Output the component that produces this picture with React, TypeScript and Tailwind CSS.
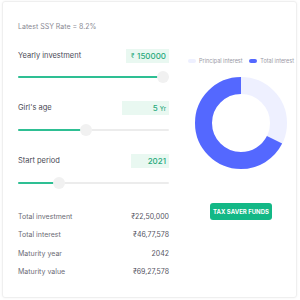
import React from 'react';

const Slider = ({ pct }: { pct: number }) => (
  <div className="relative h-[12px] flex items-center">
    <div className="w-full h-[2px] bg-[#ececec] rounded-full" />
    <div className="absolute left-0 h-[2px] bg-[#2ebf93] rounded-full" style={{ width: `${pct}%` }} />
    <div
      className="absolute w-[12px] h-[12px] rounded-full bg-[#f1f1f1] -translate-x-1/2"
      style={{ left: `${pct}%` }}
    />
  </div>
);

const Field = ({ label, children, w }: { label: string; children: React.ReactNode; w: string }) => (
  <div className="flex items-center justify-between h-[14px]">
    <span className="text-[7.5px] text-[#4a4a55]">{label}</span>
    <div className={`${w} h-[14px] bg-[#e9f8f1] flex items-center justify-end pr-[3px] text-[8px] text-[#27a97c] font-medium`}>
      {children}
    </div>
  </div>
);

const Row = ({ label, value }: { label: string; value: string }) => (
  <div className="flex justify-between items-center h-[18.5px] text-[7px] text-[#6b6b75]">
    <span>{label}</span>
    <span className="text-[#55555f]">{value}</span>
  </div>
);

const Donut = () => {
  const r = 37.5;
  const c = 2 * Math.PI * r;
  const principal = 0.325;
  return (
    <svg width="94" height="94" viewBox="0 0 94 94">
      <circle cx="47" cy="47" r={r} fill="none" stroke="#eef0ff" strokeWidth="17" />
      <circle
        cx="47"
        cy="47"
        r={r}
        fill="none"
        stroke="#5468ff"
        strokeWidth="17"
        strokeDasharray={`${c * (1 - principal)} ${c}`}
        transform="rotate(-90 47 47) scale(1 -1) translate(0 -94)"
      />
    </svg>
  );
};

export default function App() {
  return (
    <div className="w-[300px] h-[300px] bg-white p-[2px] pt-[1px]" style={{ fontFamily: 'Inter, "Noto Sans", sans-serif' }}>
      <div className="w-[295px] h-[297px] border border-[#efefef] rounded-[3px] shadow-[0_0_3px_rgba(0,0,0,0.05)] flex pl-[15px]">
        <div className="w-[151px] flex flex-col">
          <div className="mt-[20px] text-[7px] text-[#8a8a94]">Latest SSY Rate = 8.2%</div>
          <div className="mt-[16px]">
            <Field label="Yearly investment" w="w-[43px]">
              <span className="mr-auto ml-[5px] text-[6px]">₹</span>
              <span>150000</span>
            </Field>
          </div>
          <div className="mt-[8px]">
            <Slider pct={96} />
          </div>
          <div className="mt-[18px]">
            <Field label="Girl's age" w="w-[47px]">
              <span>5 <span className="text-[6px]">Yr</span></span>
            </Field>
          </div>
          <div className="mt-[9px]">
            <Slider pct={45} />
          </div>
          <div className="mt-[18px]">
            <Field label="Start period" w="w-[38px]">
              <span>2021</span>
            </Field>
          </div>
          <div className="mt-[9px]">
            <Slider pct={27} />
          </div>
          <div className="mt-[19px]">
            <Row label="Total investment" value="₹22,50,000" />
            <Row label="Total interest" value="₹46,77,578" />
            <Row label="Maturity year" value="2042" />
            <Row label="Maturity value" value="₹69,27,578" />
          </div>
        </div>
        <div className="flex-1 flex flex-col items-center pl-[19px] pr-[2px]">
          <div className="mt-[55px] w-full flex justify-between items-center text-[5.5px] text-[#9a9aa5] whitespace-nowrap">
            <div className="flex items-center gap-[3px]">
              <span className="w-[8px] h-[4px] rounded-full bg-[#eef0ff]" />
              Principal interest
            </div>
            <div className="flex items-center gap-[3px]">
              <span className="w-[8px] h-[4px] rounded-full bg-[#5468ff]" />
              Total interest
            </div>
          </div>
          <div className="mt-[11px]">
            <Donut />
          </div>
          <button className="mt-[33px] w-[62px] h-[17px] rounded-[3px] bg-[#13b886] text-white text-[6px] font-bold">
            TAX SAVER FUNDS
          </button>
        </div>
      </div>
    </div>
  );
}
